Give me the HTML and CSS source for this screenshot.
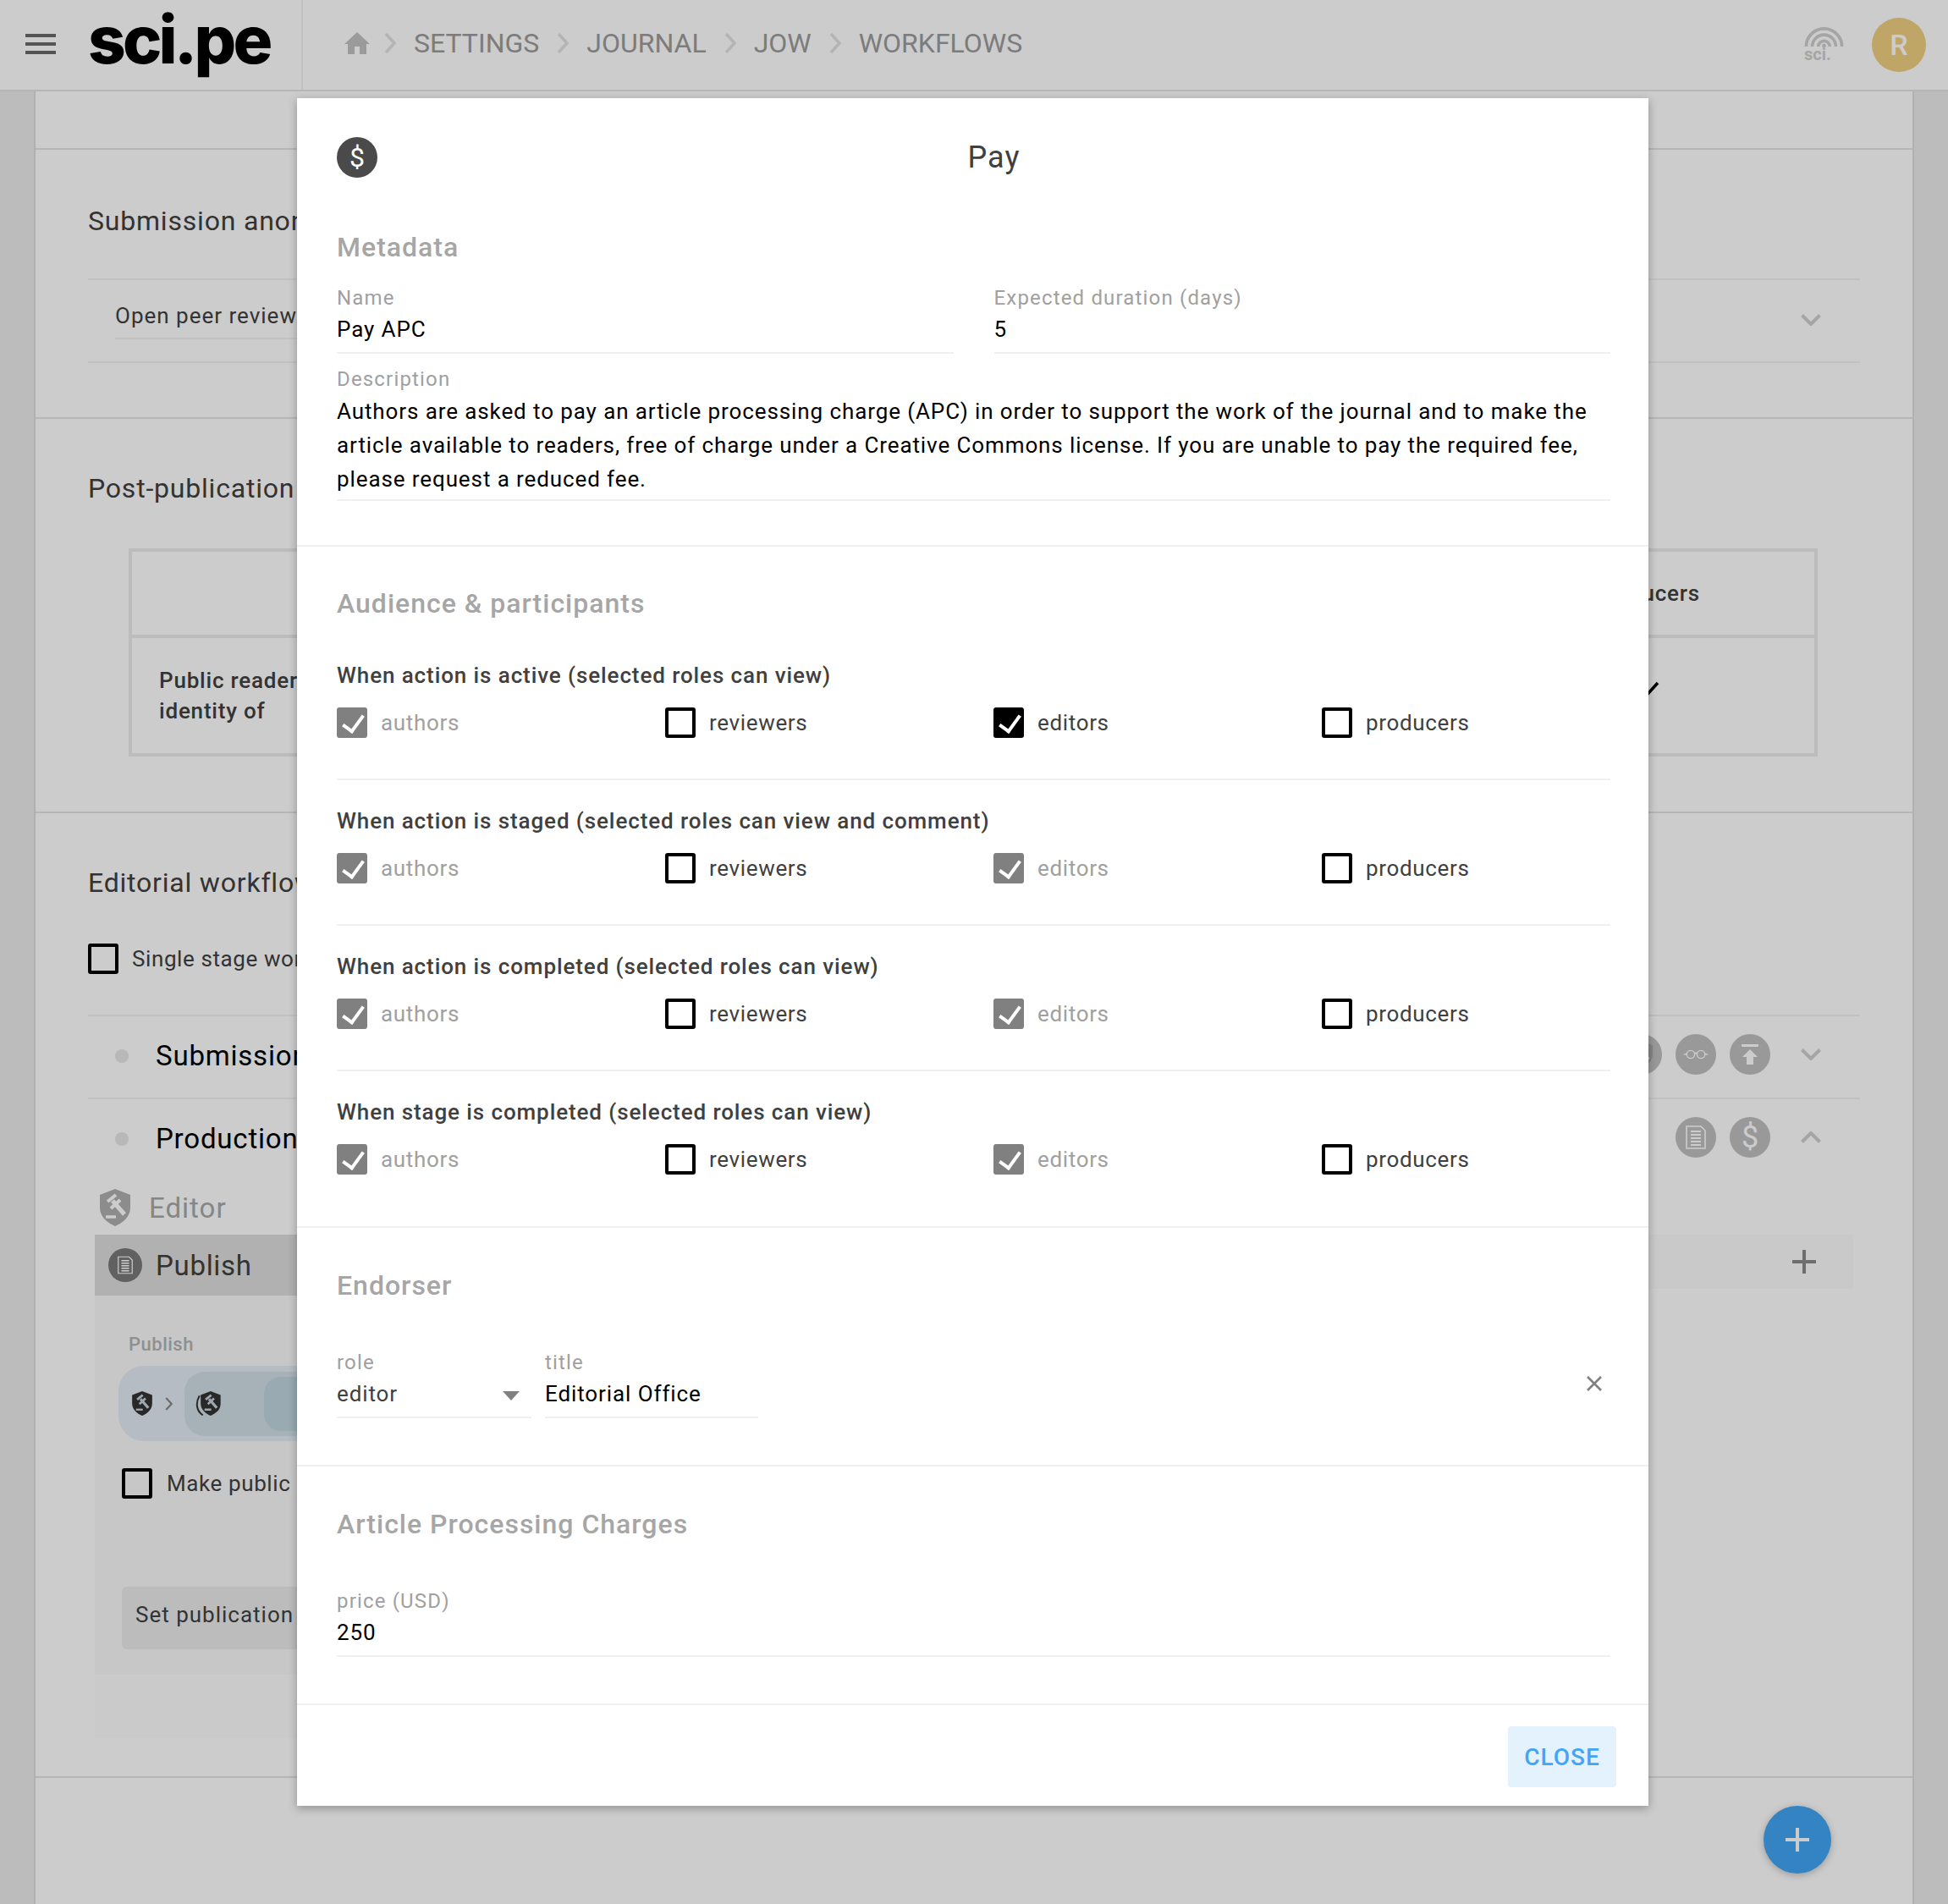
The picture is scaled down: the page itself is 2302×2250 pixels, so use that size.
FILE: index.html
```html
<!DOCTYPE html>
<html lang="en">
<head>
    <meta charset="UTF-8">
    <title>sci.pe - Workflows</title>
    <link rel="stylesheet" href="styles.css">
</head>
<body>
    <svg class="defs" width="0" height="0">
        <symbol id="chev" viewBox="0 0 14 24"><polyline points="2,1 12,12 2,23" fill="none" stroke="currentColor" stroke-width="3.500"/></symbol>
        <symbol id="down" viewBox="0 0 24 14"><polyline points="1.500,1.500 12,12 22.500,1.500" fill="none" stroke="currentColor" stroke-width="4"/></symbol>
        <symbol id="shield" viewBox="0 0 36 44">
            <path d="M18 0 L36 7 V22 C36 33 27 40 18 44 C9 40 0 33 0 22 V7 Z" fill="currentColor"/>
            <g stroke="var(--gavel)" fill="none">
                <line x1="9" y1="15" x2="19" y2="7" stroke-width="4"/>
                <line x1="13" y1="23" x2="24" y2="13" stroke-width="4"/>
                <line x1="15" y1="14" x2="29" y2="30" stroke-width="5"/>
                <line x1="7" y1="33" x2="19" y2="33" stroke-width="3.500"/>
            </g>
        </symbol>
        <symbol id="doc" viewBox="0 0 24 28">
            <path d="M1 1 H18 L23 6 V27 H1 Z" fill="none" stroke="currentColor" stroke-width="1.600"/>
            <path d="M6 7 H18 M6 11 H18 M6 15 H18 M6 19 H18 M6 23 H18" stroke="currentColor" stroke-width="2"/>
        </symbol>
    </svg>

    <header class="topbar">
        <div class="brand">
            <span class="burger"><i></i><i></i><i></i></span>
            <span class="logo">sci.pe</span>
        </div>
        <nav class="crumbs">
            <svg class="home" viewBox="0 0 30 26"><path d="M15 0 L30 14 H26 V26 H18 V17 H12 V26 H4 V14 H0 Z" fill="currentColor"/></svg>
            <svg class="crumb-sep"><use href="#chev"/></svg>
            <span>SETTINGS</span>
            <svg class="crumb-sep"><use href="#chev"/></svg>
            <span>JOURNAL</span>
            <svg class="crumb-sep"><use href="#chev"/></svg>
            <span>JOW</span>
            <svg class="crumb-sep"><use href="#chev"/></svg>
            <span>WORKFLOWS</span>
        </nav>
        <div class="top-right">
            <div class="sci-badge">
                <svg viewBox="0 0 48 26"><g fill="none" stroke="currentColor" stroke-width="3.800"><path d="M2 24 A22 22 0 0 1 46 24"/><path d="M9.500 24 A14.500 14.500 0 0 1 38.500 24"/><path d="M17 24 A7 7 0 0 1 31 24"/></g><circle cx="24" cy="23" r="2.500" fill="currentColor"/></svg>
                <span>sci.</span>
            </div>
            <div class="avatar">R</div>
        </div>
    </header>

    <main class="panel">
        <div class="strip"></div>

        <section class="block block-anon">
            <h2>Submission anonymity</h2>
            <div class="select-row">
                <span class="select-value">Open peer review</span>
                <svg class="chevron"><use href="#down"/></svg>
            </div>
        </section>

        <section class="block block-post">
            <h2>Post-publication</h2>
            <div class="matrix">
                <div class="matrix-head"><b>producers</b></div>
                <div class="matrix-row">
                    <b class="matrix-label">Public readers<br>identity of</b>
                    <svg class="matrix-check" viewBox="0 0 36 26"><polyline points="4,14 13,24 33,2" fill="none" stroke="#000" stroke-width="3.500"/></svg>
                </div>
            </div>
        </section>

        <section class="block block-flow">
            <h2>Editorial workflow</h2>
            <label class="single-stage"><span class="box"></span>Single stage workflow</label>

            <div class="stage">
                <span class="dot"></span>
                <span class="stage-name">Submission</span>
                <span class="round round-cut"><svg viewBox="0 0 36 44"><use href="#shield"/></svg></span>
                <span class="round">
                    <svg viewBox="0 0 30 14" class="glasses"><g fill="none" stroke="currentColor" stroke-width="1.500"><circle cx="8.500" cy="7" r="5"/><circle cx="21.500" cy="7" r="5"/><path d="M13.500 6 Q15 4.500 16.500 6 M3.500 6.500 L0 7 M26.500 6.500 L30 7"/></g></svg>
                </span>
                <span class="round">
                    <svg viewBox="0 0 20 24" class="upload"><path d="M0 1.500 H20" stroke="currentColor" stroke-width="3"/><path d="M10 6 L19 15 H14 V24 H6 V15 H1 Z" fill="currentColor"/></svg>
                </span>
                <svg class="chevron"><use href="#down"/></svg>
            </div>
            <div class="stage stage-open">
                <span class="dot"></span>
                <span class="stage-name">Production</span>
                <span class="round"><svg class="round-doc"><use href="#doc"/></svg></span>
                <span class="round round-dollar">$</span>
                <svg class="chevron chevron-up"><use href="#down"/></svg>
            </div>

            <div class="role"><svg class="role-shield"><use href="#shield"/></svg>Editor</div>

            <div class="actions">
                <div class="action-on">
                    <span class="action-icon"><svg><use href="#doc"/></svg></span>
                    Publish
                </div>
                <div class="action-add"><span class="plus"></span></div>
            </div>

            <div class="detail">
                <div class="detail-label">Publish</div>
                <div class="pill">
                    <svg class="pill-shield"><use href="#shield"/></svg>
                    <svg class="pill-sep"><use href="#chev"/></svg>
                    <div class="pill-in">
                        <svg class="pill-shield pill-shield-2" viewBox="0 0 45 44">
                            <path d="M7 8 C-1 22 2 36 13 43" fill="none" stroke="#333" stroke-width="3"/>
                            <use href="#shield" x="9" width="36" height="44"/>
                        </svg>
                        <div class="pill-in2"></div>
                    </div>
                </div>
                <label class="make-public"><span class="box"></span>Make public after</label>
                <button class="set-date">Set publication date</button>
            </div>
            <div class="detail-foot"></div>
        </section>
    </main>

    <button class="fab"><span class="plus"></span></button>

    <div class="overlay"></div>

    <div class="modal">
        <div class="modal-head">
            <span class="modal-icon">$</span>
            <div class="modal-title">Pay</div>
        </div>

        <section class="m-sec m-meta">
            <h3>Metadata</h3>
            <div class="two-col">
                <div class="field"><label>Name</label><div class="value">Pay APC</div></div>
                <div class="field"><label>Expected duration (days)</label><div class="value">5</div></div>
            </div>
            <div class="field field-desc">
                <label>Description</label>
                <div class="value">Authors are asked to pay an article processing charge (APC) in order to support the work of the journal and to make the article available to readers, free of charge under a Creative Commons license. If you are unable to pay the required fee, please request a reduced fee.</div>
            </div>
        </section>

        <section class="m-sec m-aud">
            <h3>Audience &amp; participants</h3>

            <div class="group">
                <h4>When action is active (selected roles can view)</h4>
                <div class="roles">
                    <label class="opt off"><span class="box on grey"></span>authors</label>
                    <label class="opt"><span class="box"></span>reviewers</label>
                    <label class="opt"><span class="box on"></span>editors</label>
                    <label class="opt"><span class="box"></span>producers</label>
                </div>
            </div>
            <div class="group">
                <h4>When action is staged (selected roles can view and comment)</h4>
                <div class="roles">
                    <label class="opt off"><span class="box on grey"></span>authors</label>
                    <label class="opt"><span class="box"></span>reviewers</label>
                    <label class="opt off"><span class="box on grey"></span>editors</label>
                    <label class="opt"><span class="box"></span>producers</label>
                </div>
            </div>
            <div class="group">
                <h4>When action is completed (selected roles can view)</h4>
                <div class="roles">
                    <label class="opt off"><span class="box on grey"></span>authors</label>
                    <label class="opt"><span class="box"></span>reviewers</label>
                    <label class="opt off"><span class="box on grey"></span>editors</label>
                    <label class="opt"><span class="box"></span>producers</label>
                </div>
            </div>
            <div class="group group-last">
                <h4>When stage is completed (selected roles can view)</h4>
                <div class="roles">
                    <label class="opt off"><span class="box on grey"></span>authors</label>
                    <label class="opt"><span class="box"></span>reviewers</label>
                    <label class="opt off"><span class="box on grey"></span>editors</label>
                    <label class="opt"><span class="box"></span>producers</label>
                </div>
            </div>
        </section>

        <section class="m-sec m-end">
            <h3>Endorser</h3>
            <div class="end-row">
                <div class="field field-role">
                    <label>role</label>
                    <div class="value value-select">editor<span class="caret"></span></div>
                </div>
                <div class="field field-title">
                    <label>title</label>
                    <div class="value">Editorial Office</div>
                </div>
                <svg class="remove" viewBox="0 0 20 20"><path d="M2 2 L18 18 M18 2 L2 18" stroke="currentColor" stroke-width="2.600"/></svg>
            </div>
        </section>

        <section class="m-sec m-apc">
            <h3>Article Processing Charges</h3>
            <div class="field field-price">
                <label>price (USD)</label>
                <div class="value">250</div>
            </div>
        </section>

        <div class="modal-foot">
            <button class="close">CLOSE</button>
        </div>
    </div>
</body>
</html>
```

FILE: styles.css
```css
* {
    box-sizing: border-box;
}

html, body {
    margin: 0;
    height: 2250px;
    overflow: hidden;
}

body {
    background: #ebebeb;
    font-family: Roboto, "Liberation Sans", sans-serif;
    color: #404040;
    position: relative;
}

.defs {
    position: absolute;
}

h2, h3, h4 {
    margin: 0;
}

/* top bar */
.topbar {
    height: 108px;
    display: flex;
    background: #fff;
    border-bottom: 2px solid #e4e4e4;
}

.brand {
    width: 358px;
    flex: none;
    display: flex;
    align-items: center;
    padding-left: 30px;
    border-right: 2px solid #f0f0f0;
}

.burger {
    width: 36px;
    margin-bottom: 2px;
    display: flex;
    flex-direction: column;
    gap: 6px;
}

.burger i {
    height: 4px;
    background: #6a6a6a;
}

.logo {
    margin-left: 38px;
    margin-top: -12px;
    font-family: Inter, sans-serif;
    font-weight: 800;
    font-size: 78px;
    letter-spacing: -3.800px;
    line-height: 90px;
    color: #000;
}

.crumbs {
    display: flex;
    align-items: center;
    padding-left: 49px;
    padding-bottom: 5px;
    gap: 21px;
    font-size: 32px;
    color: #9c9c9c;
}

.home {
    width: 30px;
    height: 26px;
    margin-right: -4px;
    color: #c2c2c2;
}

.crumb-sep {
    width: 14px;
    height: 24px;
    color: #e2e2e2;
}

.top-right {
    margin-left: auto;
    display: flex;
    align-items: center;
    gap: 33px;
    padding-right: 26px;
}

.sci-badge {
    width: 47px;
    color: #cfcfcf;
    margin-top: -2px;
}

.sci-badge svg {
    display: block;
    width: 47px;
    height: 25px;
}

.sci-badge span {
    display: block;
    font-weight: 700;
    font-size: 20px;
    line-height: 15px;
}

.avatar {
    width: 64px;
    height: 64px;
    border-radius: 50%;
    background: #efcf80;
    color: #fff;
    font-size: 34px;
    font-weight: 500;
    line-height: 64px;
    text-align: center;
}

/* page behind the dialog */
.panel {
    margin: 0 40px;
    height: 2142px;
    background: #fff;
    border-left: 2px solid #dedede;
    border-right: 2px solid #dedede;
}

.strip {
    height: 69px;
    border-bottom: 2px solid #e4e4e4;
}

.block {
    padding: 62px 62px 0;
    border-bottom: 2px solid #e4e4e4;
}

.block h2 {
    font-weight: 400;
    font-size: 32px;
    line-height: 40px;
    letter-spacing: 0.8px;
    color: #404040;
}

.block-anon {
    height: 318px;
    padding-top: 64px;
}

.select-row {
    margin-top: 48px;
    height: 100px;
    border-top: 2px solid #f2f2f2;
    border-bottom: 2px solid #f2f2f2;
    display: flex;
    justify-content: space-between;
    padding-left: 32px;
}

.select-value {
    width: 1200px;
    height: 70px;
    line-height: 84px;
    font-size: 26px;
    letter-spacing: 1px;
    border-bottom: 2px solid #f2f2f2;
}

.chevron {
    width: 24px;
    height: 14px;
    color: #cfcfcf;
    flex: none;
    margin: 40px 46px 0 0;
}

.chevron-up {
    transform: rotate(180deg);
}

.block-post {
    height: 466px;
}

.matrix {
    margin: 51px 50px 0 48px;
    height: 246px;
    border: 4px solid #ebebeb;
}

.matrix b {
    font-weight: 500;
    font-size: 26px;
    letter-spacing: 0.8px;
}

.matrix-head {
    height: 102px;
    border-bottom: 4px solid #ebebeb;
    display: flex;
    align-items: center;
    justify-content: flex-end;
    padding-right: 135px;
}

.matrix-row {
    height: 136px;
    display: flex;
    align-items: center;
    justify-content: space-between;
    padding: 0 182px 0 32px;
}

.matrix-label {
    line-height: 36px;
}

.matrix-check {
    width: 36px;
    height: 26px;
    margin-top: -4px;
    margin-bottom: 4px;
}

.block-flow {
    padding-top: 62px;
    height: 1140px;
}

.box {
    width: 36px;
    height: 36px;
    flex: none;
    border: 4px solid #000;
    border-radius: 3px;
    position: relative;
    display: block;
}

.box.on {
    background: #000;
}

.box.grey {
    background: #808080;
    border-color: #808080;
}

.box.on::after {
    content: "";
    position: absolute;
    left: 8px;
    top: 0;
    width: 11px;
    height: 21px;
    border-right: 4px solid #fff;
    border-bottom: 4px solid #fff;
    transform: rotate(36deg);
}

.single-stage {
    margin-top: 52px;
    display: flex;
    align-items: center;
    gap: 16px;
    font-size: 26px;
    letter-spacing: 0.6px;
    height: 36px;
}

.stage {
    height: 97px;
    border-bottom: 2px solid #f2f2f2;
    display: flex;
    align-items: center;
    padding-left: 32px;
    padding-bottom: 3px;
    gap: 16px;
}

.single-stage + .stage {
    margin-top: 48px;
    border-top: 2px solid #f2f2f2;
    height: 100px;
}

.stage-open {
    border-bottom: 0;
    height: 96px;
}

.dot {
    width: 16px;
    height: 16px;
    border-radius: 50%;
    background: #e6e6e6;
    flex: none;
}

.stage-name {
    margin-left: 16px;
    margin-right: auto;
    font-size: 33px;
    letter-spacing: 0.8px;
    color: #000;
}

.round {
    width: 48px;
    height: 48px;
    margin-bottom: 4px;
    border-radius: 50%;
    background: #c0c0c0;
    color: #fff;
    flex: none;
    display: flex;
    align-items: center;
    justify-content: center;
    --gavel: #fff;
}

.round-cut svg {
    width: 26px;
    height: 32px;
    color: #a8a8a8;
}

.round-doc {
    width: 24px;
    height: 28px;
    color: #fff;
}

.glasses {
    width: 28px;
    height: 14px;
}

.upload {
    width: 20px;
    height: 24px;
}

.round-dollar {
    font-size: 36px;
}

.stage .chevron {
    margin: 0 46px 4px 20px;
}

.role {
    --gavel: #fff;
    height: 64px;
    display: flex;
    align-items: center;
    padding-left: 14px;
    gap: 22px;
    font-size: 33px;
    letter-spacing: 1px;
    color: #a8a8a8;
}

.role-shield {
    width: 36px;
    height: 44px;
    color: #b0b0b0;
}

.actions {
    margin: 0 8px;
    display: flex;
    align-items: flex-start;
}

.action-on {
    --gavel: #fff;
    width: 700px;
    height: 72px;
    flex: none;
    background: #dedede;
    display: flex;
    align-items: center;
    padding-left: 16px;
    gap: 16px;
    font-size: 33px;
    letter-spacing: 0.7px;
}

.action-icon {
    width: 40px;
    height: 40px;
    border-radius: 50%;
    background: #7a7a7a;
    color: #fff;
    display: flex;
    align-items: center;
    justify-content: center;
}

.action-icon svg {
    width: 18px;
    height: 22px;
}

.action-add {
    flex: 1;
    height: 64px;
    background: #fcfcfc;
    display: flex;
    align-items: center;
    justify-content: flex-end;
    padding: 0 44px 0 0;
}

.plus {
    display: block;
    width: 28px;
    height: 28px;
    background:
        linear-gradient(currentColor, currentColor) center / 100% 4px no-repeat,
        linear-gradient(currentColor, currentColor) center / 4px 100% no-repeat;
    color: #8a8a8a;
}

.detail {
    margin-left: 8px;
    width: 1000px;
    height: 448px;
    background: #f9f9f9;
    padding: 42px 28px 0;
}

.detail-label {
    padding-left: 12px;
    font-size: 22px;
    line-height: 32px;
    font-weight: 500;
    letter-spacing: 0.5px;
    color: #b3b3b3;
}

.pill {
    --gavel: #c8d2da;
    margin-top: 9px;
    height: 89px;
    border-radius: 30px;
    background: #e3ebf4;
    display: flex;
    align-items: center;
    padding-left: 16px;
}

.pill-shield {
    width: 24px;
    height: 29px;
    color: #333;
}

.pill-sep {
    width: 9px;
    height: 16px;
    margin: 0 14px 0 15px;
    color: #888;
}

.pill-in {
    flex: 1;
    height: 76px;
    border-radius: 24px;
    background: #d1dfe6;
    display: flex;
    align-items: center;
    padding-left: 13px;
}

.pill-shield-2 {
    width: 30px;
}

.pill-in2 {
    margin-left: 51px;
    flex: 1;
    height: 64px;
    border-radius: 20px;
    background: #c0d5e0;
}

.make-public {
    margin-top: 32px;
    margin-left: 4px;
    display: flex;
    align-items: center;
    gap: 17px;
    font-size: 26px;
    letter-spacing: 0.6px;
    height: 36px;
}

.set-date {
    display: block;
    margin: 104px 0 0 4px;
    width: 400px;
    height: 74px;
    border: 0;
    border-radius: 6px;
    background: #ebebeb;
    font: inherit;
    font-size: 26px;
    letter-spacing: 1px;
    color: #404040;
    text-align: left;
    padding: 0 16px 8px;
}

.detail-foot {
    margin-left: 8px;
    width: 1000px;
    height: 75px;
    background: #fdfdfd;
}

.fab {
    position: absolute;
    left: 2084px;
    top: 2134px;
    width: 80px;
    height: 80px;
    border: 0;
    border-radius: 50%;
    background: #42a5f5;
    box-shadow: 0 2px 8px rgba(0, 0, 0, 0.25);
    display: flex;
    align-items: center;
    justify-content: center;
}

.fab .plus {
    color: #fff;
}

.overlay {
    position: absolute;
    inset: 0;
    background: rgba(0, 0, 0, 0.2);
}

/* dialog */
.modal {
    position: absolute;
    left: 351px;
    top: 116px;
    width: 1597px;
    background: #fff;
    box-shadow: 0 3px 10px rgba(0, 0, 0, 0.3);
    color: #000;
}

.modal-head {
    height: 156px;
    padding: 46px 45px 0 47px;
    display: flex;
    align-items: flex-start;
}

.modal-icon {
    width: 48px;
    height: 48px;
    border-radius: 50%;
    background: #4a4a4a;
    color: #fff;
    font-size: 32px;
    line-height: 48px;
    text-align: center;
    flex: none;
}

.modal-title {
    flex: 1;
    text-align: center;
    font-size: 36px;
    line-height: 48px;
    letter-spacing: 1px;
    color: #404040;
}

.m-sec {
    padding: 0 45px 0 47px;
    border-bottom: 2px solid #f0f0f0;
}

.m-sec h3 {
    font-weight: 500;
    font-size: 32px;
    line-height: 40px;
    letter-spacing: 1px;
    color: #a6a6a6;
}

.m-aud h3 {
    padding-top: 1px;
    margin-bottom: -1px;
}

.field label {
    display: block;
    font-size: 24px;
    line-height: 32px;
    letter-spacing: 1.170px;
    color: #a0a0a0;
}

.value {
    font-size: 26px;
    line-height: 40px;
    letter-spacing: 0.900px;
    padding-top: 1px;
    padding-bottom: 7px;
    border-bottom: 2px solid #f0f0f0;
}

.two-col {
    margin-top: 24px;
    display: grid;
    grid-template-columns: 1fr 1fr;
    column-gap: 48px;
}

.field-desc {
    margin-top: 14px;
}

.field-desc .value {
    padding-top: 2px;
    padding-bottom: 4px;
}

.m-meta {
    padding-bottom: 52px;
}

.m-aud {
    padding-top: 46px;
}

.group {
    margin-top: 48px;
    height: 142px;
    border-bottom: 2px solid #f0f0f0;
}

.group + .group {
    margin-top: 30px;
}

.group-last {
    border-bottom: 0;
    height: 153px;
}

.group h4 {
    font-weight: 500;
    font-size: 26px;
    line-height: 36px;
    letter-spacing: 0.900px;
    color: #404040;
}

.roles {
    margin-top: 20px;
    display: grid;
    grid-template-columns: repeat(4, 388px);
}

.opt {
    display: flex;
    align-items: center;
    gap: 16px;
    font-size: 26px;
    letter-spacing: 0.660px;
    color: #404040;
}

.opt.off {
    color: #a0a0a0;
}

.m-end {
    padding-top: 48px;
    height: 282px;
}

.end-row {
    margin-top: 55px;
    display: flex;
    align-items: center;
}

.field-role {
    width: 230px;
    margin-right: 16px;
}

.field-role .value {
    color: #404040;
}

.value-select {
    display: flex;
    align-items: center;
    justify-content: space-between;
    padding-right: 14px;
}

.caret {
    width: 0;
    height: 0;
    border-left: 10px solid transparent;
    border-right: 10px solid transparent;
    border-top: 11px solid #808080;
    margin-top: 4px;
}

.field-title {
    width: 252px;
}

.remove {
    width: 20px;
    height: 20px;
    margin-left: auto;
    margin-right: 9px;
    color: #808080;
}

.m-apc {
    padding-top: 48px;
    height: 282px;
}

.field-price {
    margin-top: 55px;
}

.modal-foot {
    height: 119px;
    padding: 25px 38px 0 0;
    display: flex;
    justify-content: flex-end;
    align-items: flex-start;
}

.close {
    width: 128px;
    height: 72px;
    border: 0;
    border-radius: 4px;
    background: #e3f2fd;
    color: #42a5f5;
    font: inherit;
    font-size: 28px;
    font-weight: 500;
    letter-spacing: 1px;
}
```
